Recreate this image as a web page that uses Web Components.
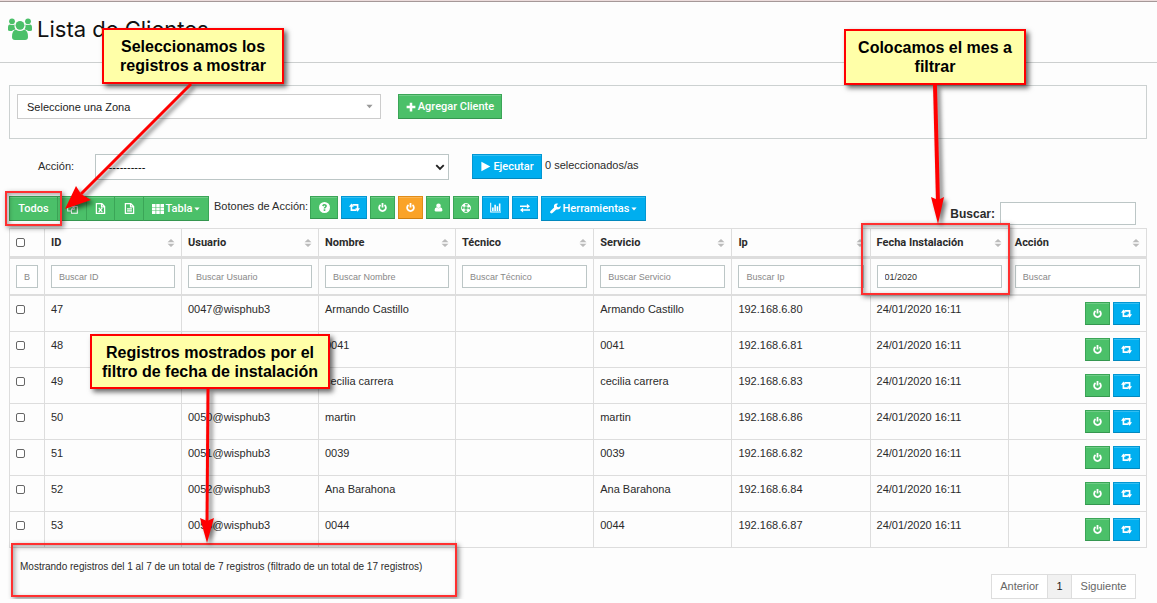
<!DOCTYPE html>
<html lang="es">
<head>
<meta charset="utf-8">
<title>Lista de Clientes</title>
<style>
body{margin:0;background:#fdfdfd;color:#2b2b2b;font-family:"Liberation Sans",Arial,sans-serif;font-size:11px;line-height:14px}
</style>
</head>
<body>
<clients-page></clients-page>
<script>
const define=(name,html,setup)=>customElements.define(name,class extends HTMLElement{
  constructor(){super();this.attachShadow({mode:'open'});}
  connectedCallback(){
    if(this.shadowRoot.childNodes.length)return;
    const t=document.createElement('template');
    t.innerHTML=typeof html==='function'?html(this):html;
    this.shadowRoot.append(t.content.cloneNode(true));
    if(setup)setup(this);
  }
});

const S='fill="none" stroke="currentColor"';
const ICONS={
  users:'<circle cx="4" cy="3.300" r="2.900"/><circle cx="20" cy="3.300" r="2.900"/><path d="M0 12V9.500Q0 6.500 2 6.500q2 1 4.500 0Q6 9.500 7.500 11.500 5 11.500 3.800 13H2q-2 0-2-1zM24 12V9.500q0-3-2-3-2 1-4.500 0 .5 3-1 5 2.500 0 3.700 1.500H22q2 0 2-1z"/><circle cx="12" cy="7.300" r="4.400"/><path d="M4 19q0-7 4-7.200 4 2.600 8 0 4 .2 4 7.200 0 3-3 3H7q-3 0-3-3z"/>',
  plus:'<path d="M6 1h4v5h5v4h-5v5H6v-5H1V6h5z"/>',
  play:'<path d="M2 1l13 7-13 7z"/>',
  power:`<path ${S} stroke-width="3.200" d="M4.500 3.500a6 6 0 1 0 7 0M8 0v8"/>`,
  retweet:`<path ${S} stroke-width="2.400" d="M3.500 5v6.800H11M5 4.200h7.500V11"/><path d="M0 7l3.500-5L7 7zM9 9h7l-3.500 5z"/>`,
  question:'<path fill-rule="evenodd" d="M8 0a8 8 0 1 0 0 16A8 8 0 0 0 8 0zM4.600 5.600C5 3.800 6.200 2.900 8 2.900c2 0 3.500 1.200 3.500 3 0 2-2.300 2.200-2.300 3.600H6.800c0-2.300 2.200-2.500 2.200-3.500 0-1.200-2-1.200-2.200.5zM6.800 10.600h2.400v2.400H6.800z"/>',
  user:'<circle cx="8" cy="5" r="4"/><path d="M1 13q0-5 3.500-5.500Q8 11 11.500 7.500 15 8 15 13q0 2-2 2H3q-2 0-2-2z"/>',
  ring:`<circle cx="8" cy="8" r="5.300" ${S} stroke-width="4" stroke-dasharray="4.160 4.165" stroke-dashoffset="-2.080"/><circle cx="8" cy="8" r="7.200" ${S} stroke-width="1.500"/><circle cx="8" cy="8" r="3.300" ${S} stroke-width="1"/>`,
  chart:`<path ${S} stroke-width="1.500" d="M1 1v13.500h15"/><path d="M3 8h2.300v5H3zM6.300 4h2.300v9H6.300zM9.600 6h2.300v7H9.600zM12.900 2h2.300v11h-2.300z"/>`,
  exchange:`<path ${S} stroke-width="2.400" d="M0 5h11M5 11h11"/><path d="M11 1l5 4-5 4zM5 7l-5 4 5 4z"/>`,
  wrench:'<path d="M15.500 4.500L12.600 6 10.200 5.600 9.800 3.400 12 1Q8.500-.2 6.500 2.200 5.200 4 6 6.500L.8 11.800q-1.200 1.600 0 2.800 1.400 1.200 2.800 0l5.600-5.300q3.300.8 5.300-1.300 1.200-1.600 1-3.500z"/>',
  copy:`<path ${S} stroke-width="1.500" d="M6 4.500V1h4.500v3M6 1L1 5v6.500h5M6 5h4M10.500 5H15v10H6.500V9zM10.500 5v4h-4M5.500 1v4.500H1"/>`,
  excel:`<path ${S} stroke-width="1.800" d="M2 1h8l4 4v10H2zM9.500 1v4.500H14M5.500 7l5 6M10.500 7l-5 6"/>`,
  file:`<path ${S} stroke-width="1.800" d="M2 1h8l4 4v10H2zM9.500 1v4.500H14M4.500 8.500h7M4.500 11.500h7"/>`,
  grid:'<path d="M0 1h5v4H0zM6 1h5v4H6zM12 1h5v4h-5zM0 6h5v4H0zM6 6h5v4H6zM12 6h5v4h-5zM0 11h5v4H0zM6 11h5v4H6zM12 11h5v4h-5z"/>',
  caret:'<path d="M1 4h14L8 12z"/>',
  chevron:`<path ${S} stroke-width="3" d="M2 5l6 6 6-6"/>`,
  sort:'<path d="M1 6.500h14L8 0zM1 9.500h14L8 16z"/>'
};
define('ui-icon',el=>{
  const n=el.getAttribute('name'),s=el.getAttribute('size')||11;
  const box=n==='users'?'0 0 24 22':n==='grid'?'0 0 17 16':'0 0 16 16';
  return `<style>:host{display:inline-flex;flex:none}svg{display:block;fill:currentColor}</style>
  <svg width="${s}" height="${s}" viewBox="${box}" aria-hidden="true">${ICONS[n]}</svg>`;
});

define('ui-button',el=>`<style>
:host{display:inline-flex}
button{box-sizing:border-box;width:var(--w,auto);height:var(--h,25px);display:flex;align-items:center;justify-content:center;gap:2px;margin:0;padding:0;
 border:1px solid #3ba557;border-bottom-color:#35964f;background:#4bc069;color:#fff;font:500 11px/14px Roboto,"Liberation Sans",sans-serif;
 box-shadow:inset 0 1px 0 #ffffff33}
:host([tone=blue]) button{background:#00aeef;border-color:#0297d3;border-bottom-color:#0288bd}
:host([tone=orange]) button{background:#faa328;border-color:#e08c18;border-bottom-color:#cf7f10}
:host([joined]) button{border-right-width:0}
</style><button type="button" aria-label="${el.getAttribute('label')||el.textContent.trim()}"><slot></slot></button>`);

define('page-header',`<style>
:host{display:block;border-top:1px solid #ecdcdc}
header{box-sizing:border-box;height:62px;border-top:1px solid #a59898;border-bottom:1px solid #cccfcf;display:flex;align-items:center;gap:5px;padding:0 8px 6px}
ui-icon{color:#4bc069}
h1{margin:0;font:22px/28px Inter,"Open Sans",sans-serif;color:#111}
</style><header><ui-icon name="users" size="24"></ui-icon><h1><slot></slot></h1></header>`);

define('zone-panel',`<style>
:host{display:block;margin:22px 10px 0 9px}
form{box-sizing:border-box;height:54px;border:1px solid #ccd1d1;padding:8px 7px;display:flex;align-items:flex-start;gap:17px}
.field{position:relative;width:364px;display:flex}
select{box-sizing:border-box;width:100%;height:25px;border:1px solid #ccc;background:#fff;appearance:none;padding:0 9px;font:11px/14px "Liberation Sans",Arial,sans-serif;color:#222;border-radius:0}
.field ui-icon{position:absolute;right:8px;top:9px;color:#999;pointer-events:none}
</style><form><div class="field"><select aria-label="Zona"><option>Seleccione una Zona</option></select><ui-icon name="caret" size="7"></ui-icon></div>
<ui-button style="--w:104px"><ui-icon name="plus" size="10"></ui-icon>Agregar Cliente</ui-button></form>`);

define('action-form',`<style>
:host{display:block;margin:15px 10px 0 38px}
form{display:flex;align-items:flex-start}
label{width:57px;line-height:24px}
.field{position:relative;width:354px;display:flex;margin-right:23px}
select{box-sizing:border-box;width:100%;height:26px;border:1px solid #bcc6c6;background:#fff;appearance:none;padding:0 9px;font:11px/14px "Liberation Sans",Arial,sans-serif;color:#000;border-radius:0}
.field ui-icon{position:absolute;right:4px;top:8px;color:#222;pointer-events:none}
span{line-height:22px;margin-left:3px}
</style><form><label for="action">Acción:</label><div class="field"><select id="action"><option>-----------</option></select><ui-icon name="chevron" size="10"></ui-icon></div>
<ui-button tone="blue" style="--w:70px"><ui-icon name="play" size="11"></ui-icon>Ejecutar</ui-button><span>0 seleccionados/as</span></form>`);

define('table-toolbar',`<style>
:host{display:block;margin:16px 21px 0 9px}
.bar{display:flex;align-items:flex-start;height:32px}
.group{display:flex}
.actions{display:flex;gap:3px;--h:23px}
.text{box-sizing:border-box;width:101px;padding-left:5px;line-height:20px;white-space:nowrap}
.search{margin:6px 0 0 auto;display:flex;align-items:center;gap:5px}
label{font:bold 12px/18px "Liberation Sans",Arial,sans-serif}
input{box-sizing:border-box;width:136px;height:23px;border:1px solid #bcc6c6;background:#fff;padding:0 6px;border-radius:0}
</style><div class="bar"><div class="group">
<ui-button joined style="--w:48px">Todos</ui-button>
<ui-button joined label="Copiar" style="--w:29px"><ui-icon name="copy"></ui-icon></ui-button>
<ui-button joined label="Excel" style="--w:28px"><ui-icon name="excel"></ui-icon></ui-button>
<ui-button joined label="Archivo" style="--w:29px"><ui-icon name="file"></ui-icon></ui-button>
<ui-button style="--w:66px"><ui-icon name="grid" size="12"></ui-icon>Tabla<ui-icon name="caret" size="6"></ui-icon></ui-button></div>
<span class="text">Botones de Acción:</span>
<div class="actions">
<ui-button label="Ayuda" style="--w:28px"><ui-icon name="question"></ui-icon></ui-button>
<ui-button label="Reiniciar" tone="blue" style="--w:26px"><ui-icon name="retweet" size="11"></ui-icon></ui-button>
<ui-button label="Activar" style="--w:25px"><ui-icon name="power" size="9"></ui-icon></ui-button>
<ui-button label="Suspender" tone="orange" style="--w:25px"><ui-icon name="power" size="9"></ui-icon></ui-button>
<ui-button label="Cliente" style="--w:24px"><ui-icon name="user" size="9"></ui-icon></ui-button>
<ui-button label="Soporte" style="--w:26px"><ui-icon name="ring" size="10"></ui-icon></ui-button>
<ui-button label="Consumo" tone="blue" style="--w:27px"><ui-icon name="chart"></ui-icon></ui-button>
<ui-button label="Cambiar" tone="blue" style="--w:26px"><ui-icon name="exchange" size="10"></ui-icon></ui-button>
<ui-button tone="blue" style="--w:105px;--h:25px"><ui-icon name="wrench"></ui-icon>Herramientas<ui-icon name="caret" size="6"></ui-icon></ui-button></div>
<div class="search"><label for="q">Buscar:</label><input id="q" type="search"></div></div>`);

const COLS=[['ID','Buscar ID'],['Usuario','Buscar Usuario'],['Nombre','Buscar Nombre'],['Técnico','Buscar Técnico'],['Servicio','Buscar Servicio'],['Ip','Buscar Ip'],['Fecha Instalación','Buscar Fecha','01/2020'],['Acción','Buscar']];
const ROWS=[[47,'0047@wisphub3','Armando Castillo',80],[48,'0048@wisphub3','0041',81],[49,'0049@wisphub3','cecilia carrera',83],[50,'0050@wisphub3','martin',86],[51,'0051@wisphub3','0039',82],[52,'0052@wisphub3','Ana Barahona',84],[53,'0053@wisphub3','0044',87]];
define('client-table',()=>`<style>
:host{display:block;margin:0 10px 0 9px}
table{width:100%;table-layout:fixed;border-spacing:0;border:solid #ddd;border-width:1px 0 0 1px}
.check{width:35px}.narrow{width:137px}
th,td{box-sizing:border-box;border:solid #ddd;border-width:0 1px 1px 0;padding:0 6px;text-align:left;vertical-align:top}
thead th{height:30px;border-bottom-width:3px;vertical-align:middle;font:bold 11px/14px Roboto,"Liberation Sans",sans-serif}
.filters td{height:37px;border-bottom-width:2px;vertical-align:middle}
tbody td{height:36px;padding-top:6px}
.head{display:flex;justify-content:space-between;align-items:center}
.head ui-icon{color:#bbb}
input[type=checkbox]{display:block;margin:0;width:9px;height:9px;appearance:none;border:1px solid #666;border-radius:2px;background:#fff}
tbody input[type=checkbox]{margin-top:3px}
input[type=text]{box-sizing:border-box;display:block;width:100%;height:23px;border:1px solid #bcc6c6;border-radius:0;background:#fff;padding:0 7px;font:9px/12px "Liberation Sans",Arial,sans-serif;color:#333}
::placeholder{color:#888;opacity:1}
.buttons{display:flex;justify-content:flex-end;gap:3px;--h:23px}
</style><table><colgroup><col class="check"><col class="narrow"><col class="narrow"><col class="narrow"><col><col><col><col><col></colgroup>
<thead><tr><th><input type="checkbox" aria-label="Seleccionar todos"></th>${COLS.map(c=>`<th scope="col"><div class="head">${c[0]}<ui-icon name="sort" size="8"></ui-icon></div></th>`).join('')}</tr>
<tr class="filters"><td><input type="text" placeholder="Buscar" aria-label="Buscar selección"></td>${COLS.map(c=>`<td><input type="text" placeholder="${c[1]}" aria-label="Filtrar ${c[0]}" value="${c[2]||''}"></td>`).join('')}</tr></thead>
<tbody>${ROWS.map(r=>`<tr><td><input type="checkbox" aria-label="Seleccionar ${r[0]}"></td><td>${r[0]}</td><td>${r[1]}</td><td>${r[2]}</td><td></td><td>${r[2]}</td><td>192.168.6.${r[3]}</td><td>24/01/2020 16:11</td><td><div class="buttons"><ui-button label="Activar" style="--w:25px"><ui-icon name="power" size="9"></ui-icon></ui-button><ui-button label="Reiniciar" tone="blue" style="--w:27px"><ui-icon name="retweet" size="11"></ui-icon></ui-button></div></td></tr>`).join('')}</tbody></table>`);

define('table-footer',`<style>
:host{display:block;margin:0 21px 0 20px}
footer{display:flex;justify-content:space-between;align-items:flex-start}
p{margin:12px 0 0;font-size:10px}
nav{display:flex;margin-top:26px;border:1px solid #ddd;line-height:23px;font-size:11px}
a{box-sizing:border-box;color:#666;text-decoration:none;text-align:center;width:55px;background:#fff}
a[aria-current]{width:25px;background:#f1f1f1;color:#222;border:solid #ddd;border-width:0 1px}
a:last-child{width:63px}
</style><footer><p>Mostrando registros del 1 al 7 de un total de 7 registros (filtrado de un total de 17 registros)</p>
<nav aria-label="Páginas"><a href="#prev">Anterior</a><a href="#1" aria-current="page">1</a><a href="#next">Siguiente</a></nav></footer>`);

define('note-frame',`<style>:host{position:absolute;box-sizing:border-box;border:2px solid #ff3030;box-shadow:2px 2px 5px #0007,inset 2px 2px 5px #0005}</style>`);
define('note-callout',`<style>:host{position:absolute;box-sizing:border-box;border:2px solid #f00;background:#ffffa8;box-shadow:3px 3px 5px #0009;
color:#000;font:bold 16px/19px "Liberation Sans",Arial,sans-serif;text-align:center;padding:7px 0;white-space:nowrap}</style><slot></slot>`);
define('note-arrows',`<style>:host{position:absolute;left:0;top:0;width:100%}svg{display:block;overflow:visible;filter:drop-shadow(3px 3px 2px #0008)}</style>
<svg width="1000" height="560" aria-hidden="true"><g stroke="#f00" stroke-width="3"><path d="M191 84L81 194"/><path stroke-width="4" d="M935 85l3 118" /><path d="M208 389l-1 134"/></g>
<g fill="#f00"><path d="M65 209l11-23 5 8 10 6z"/><path d="M938 224l-7-27 7 3 6-3z"/><path d="M207 543l-7-25 7 3 7-3z"/></g></svg>`);
define('note-layer',`<style>:host{position:absolute;left:0;top:0;right:0;pointer-events:none}
.a{left:102px;top:28px;width:182px;height:56px}.b{left:844px;top:29px;width:182px;height:56px}.c{left:90px;top:334px;width:240px;height:55px}
.d{left:5px;top:191px;width:57px;height:35px}.e{left:861px;top:223px;width:149px;height:72px}.f{left:11px;top:543px;width:446px;height:54px}
</style><note-frame class="d"></note-frame><note-frame class="e"></note-frame><note-frame class="f"></note-frame>
<note-callout class="a">Seleccionamos los<br>registros a mostrar</note-callout><note-callout class="b">Colocamos el mes a<br>filtrar</note-callout><note-callout class="c">Registros mostrados por el<br>filtro de fecha de instalación</note-callout>
<note-arrows></note-arrows>`);

define('clients-page',`<style>:host{display:block;position:relative}</style>
<page-header>Lista de Clientes</page-header>
<main><zone-panel></zone-panel><action-form></action-form><table-toolbar></table-toolbar><client-table></client-table><table-footer></table-footer></main>
<note-layer></note-layer>`);
</script>
</body>
</html>
